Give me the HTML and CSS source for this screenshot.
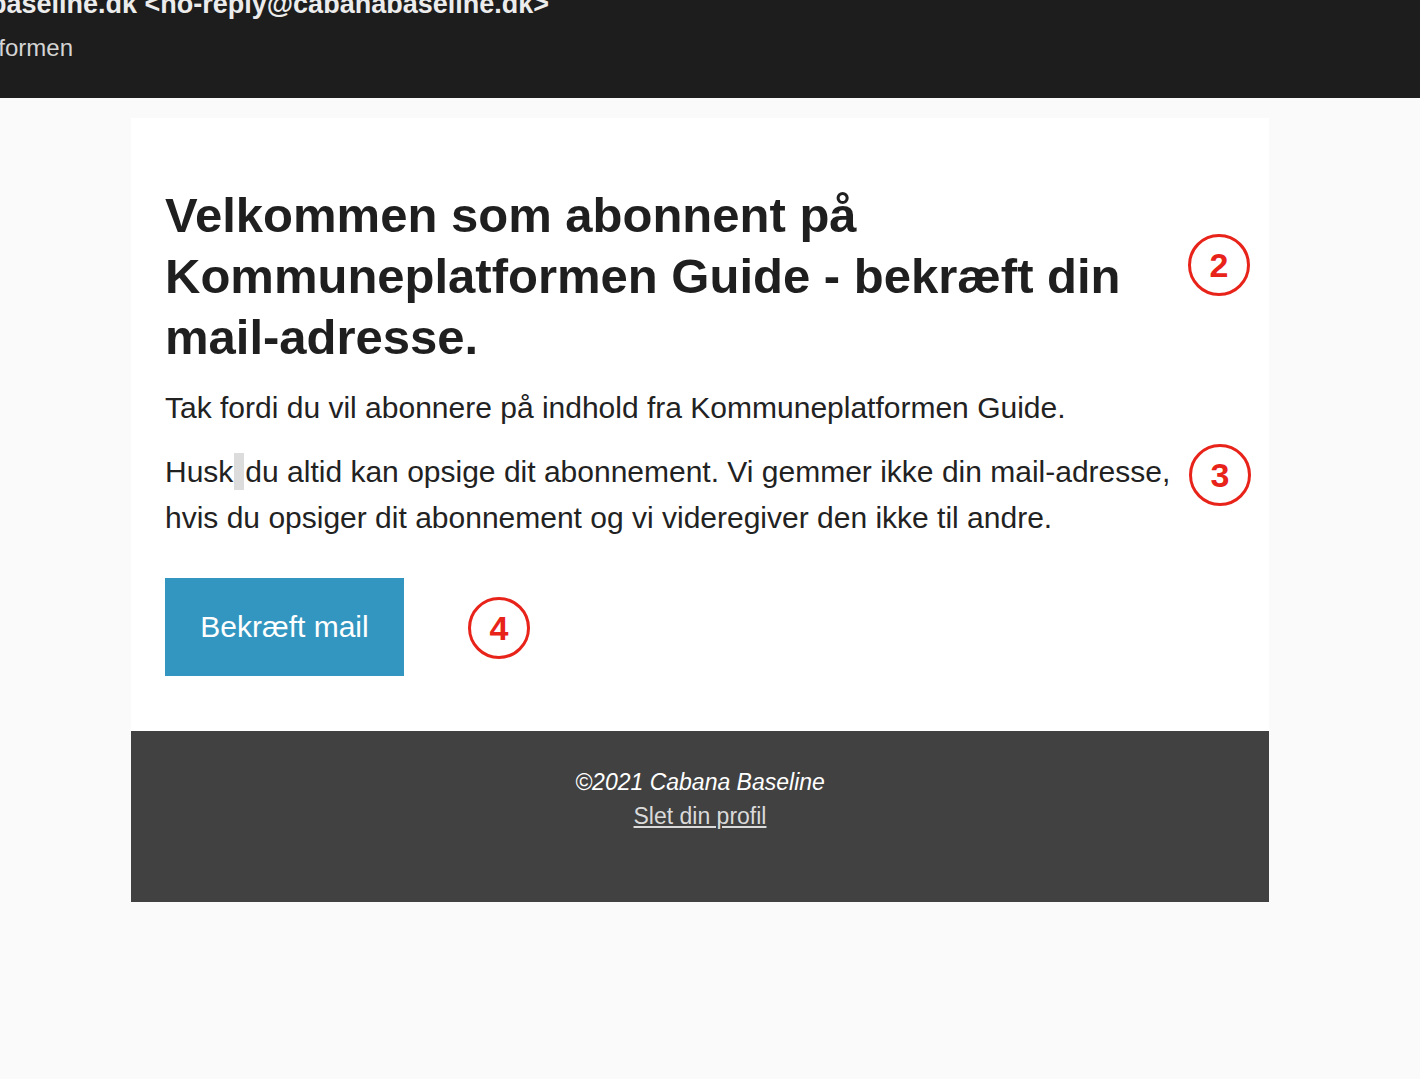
FILE: index.html
```html
<!DOCTYPE html>
<html lang="da">
<head>
  <meta charset="UTF-8" />
  <title>Bekræft din mail-adresse</title>
  <link rel="stylesheet" href="styles.css">
</head>
<body>

  <header class="mail-head">
    <div class="from-row">
      <span class="from">no-reply@cabanabaseline.dk &lt;no-reply@cabanabaseline.dk&gt;</span>
    </div>
    <div class="subject-row">
      <span class="subject">Velkommen som abonnent på Kommuneplatformen</span>
    </div>
  </header>

  <div class="mail-body">
    <div class="card">
      <div class="content">
        <h1>Velkommen som abonnent på Kommuneplatformen Guide - bekræft din mail-adresse.</h1>
        <p>Tak fordi du vil abonnere på indhold fra Kommuneplatformen Guide.</p>
        <p>Husk<span class="cursor"></span>du altid kan opsige dit abonnement. Vi gemmer ikke din mail-adresse, hvis du opsiger dit abonnement og vi videregiver den ikke til andre.</p>
        <a class="confirm" href="#">Bekræft mail</a>

        <!-- annoteringer -->
        <span class="mark mark-2">2</span>
        <span class="mark mark-3">3</span>
        <span class="mark mark-4">4</span>
      </div>
      <footer class="card-foot">
        <div class="copy">©2021 Cabana Baseline</div>
        <a href="#">Slet din profil</a>
      </footer>
    </div>
  </div>

</body>
</html>
```

FILE: styles.css
```css
body {
  font-family: "Liberation Sans", Arial, Helvetica, sans-serif;
  margin: 0;
  background: #fafafa;
  color: #222;
}

/* mail header (cut off) */
.mail-head {
  background: #1d1d1d;
  height: 98px;
  overflow: hidden;
}
.from-row {
  display: flex;
  justify-content: flex-end;
  width: 549px;
  height: 30px;
  margin-top: -11px;
  white-space: nowrap;
}
.from {
  color: #ececec;
  font-weight: bold;
  font-size: 27px;
  line-height: 30px;
}
.subject-row {
  display: flex;
  justify-content: flex-end;
  width: 73px;
  margin-top: 15px;
  white-space: nowrap;
}
.subject {
  color: #d4d4d4;
  font-size: 24px;
  line-height: 28px;
}

.mail-body {
  padding: 20px 0 0 131px;
}
.card {
  width: 1138px;
  background: white;
}
.content {
  position: relative;
  padding: 67px 34px 55px;
}
.content h1 {
  margin: 0 0 17px;
  font-size: 49px;
  line-height: 61px;
  color: #1f1f1f;
  padding-right: 60px;
}
.content p {
  margin: 0 0 18px;
  font-size: 30px;
  line-height: 46px;
  padding-right: 8px;
}
.cursor {
  display: inline-block;
  width: 10px;
  height: 37px;
  margin: 0 1px 0 1px;
  vertical-align: -8px;
  background: #dcdcdc;
}
.confirm {
  display: inline-flex;
  align-items: center;
  justify-content: center;
  width: 239px;
  height: 98px;
  margin-top: 19px;
  background: #3396c0;
  color: white;
  font-size: 30px;
  text-decoration: none;
}

.mark {
  position: absolute;
  width: 56px;
  height: 56px;
  border: 3px solid #e8231a;
  border-radius: 50%;
  color: #e8231a;
  font-weight: bold;
  font-size: 34px;
  display: flex;
  align-items: center;
  justify-content: center;
}
.mark-2 { left: 1057px; top: 116px; }
.mark-3 { left: 1058px; top: 326px; }
.mark-4 { left: 337px; top: 479px; }

.card-foot {
  background: #414141;
  height: 171px;
  box-sizing: border-box;
  padding-top: 34px;
  text-align: center;
  font-size: 23px;
  line-height: 34px;
}
.copy {
  color: white;
  font-style: italic;
}
.card-foot a {
  color: #dadada;
  text-decoration: underline;
}
```
